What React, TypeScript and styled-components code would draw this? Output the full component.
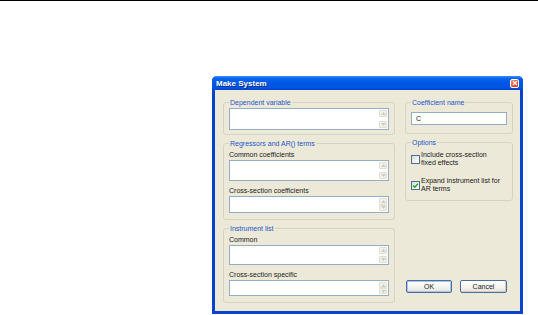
import React from "react";
import styled, { createGlobalStyle } from "styled-components";

const GlobalStyle = createGlobalStyle`
  html, body {
    margin: 0;
    padding: 0;
    background: #fff;
  }
  body {
    font-family: "Liberation Sans", Arial, sans-serif;
  }
`;

const Page = styled.div`
  width: 538px;
  height: 315px;
  box-sizing: border-box;
  border-top: 1px solid #000;
  padding: 75px 0 0 212px;
  overflow: hidden;
`;

const Window = styled.div`
  width: 311px;
  height: 238px;
  display: flex;
  flex-direction: column;
  border-radius: 5px 5px 0 0;
  overflow: hidden;
  background: #0a42d0;
`;

const TitleBar = styled.div`
  height: 14px;
  flex-shrink: 0;
  display: flex;
  align-items: center;
  justify-content: space-between;
  padding: 0 4px;
  background: linear-gradient(#3d8ef9 0%, #0a62ec 18%, #0057e6 50%, #0054e2 85%, #0842c8 100%);
`;

const Title = styled.span`
  color: #fff;
  font-weight: bold;
  font-size: 8px;
  text-shadow: 1px 1px 0 #0a2a8a;
`;

const CloseButton = styled.div`
  width: 9px;
  height: 9px;
  box-sizing: border-box;
  border: 1px solid #fff;
  border-radius: 2px;
  background: linear-gradient(135deg, #f09a80, #e0532e 55%, #c63c18);
  display: flex;
  align-items: center;
  justify-content: center;
`;

const Frame = styled.div`
  flex: 1;
  display: flex;
  padding: 0 3px 3px;
`;

const Body = styled.div`
  flex: 1;
  background: #ece9d8;
  display: grid;
  grid-template-columns: 172px 108px;
  column-gap: 10px;
  padding: 8px 7px 8px 8px;
  font-size: 7px;
  color: #1a1a1a;
`;

const Column = styled.div`
  display: flex;
  flex-direction: column;
  gap: 4px;
`;

const Group = styled.fieldset<{ $pad?: number }>`
  margin: 0;
  padding: 0 5px ${(p) => p.$pad ?? 6}px;
  border: 1px solid #d6d3c2;
  border-radius: 3px;
  display: flex;
  flex-direction: column;
  min-width: 0;
`;

const Legend = styled.legend`
  padding: 0 1px;
  font-size: 7px;
  line-height: 9px;
  color: #2456c8;
`;

const FieldLabel = styled.div<{ $mt?: number }>`
  line-height: 9px;
  margin-top: ${(p) => p.$mt ?? 2}px;
`;

const TextBox = styled.div<{ $h: number; $mt?: number }>`
  height: ${(p) => p.$h}px;
  margin-top: ${(p) => p.$mt ?? 1}px;
  box-sizing: border-box;
  border: 1px solid #94aec6;
  background: #fff;
  display: flex;
  justify-content: space-between;
  padding: 1px 1px 1px 4px;
  line-height: 10px;
`;

const ScrollBar = styled.div`
  width: 8px;
  display: flex;
  flex-direction: column;
  justify-content: space-between;
`;

const ScrollBtn = styled.div`
  height: 7px;
  box-sizing: border-box;
  border: 1px solid #e0ded2;
  border-radius: 1px;
  background: #f3f2ea;
  display: flex;
  align-items: center;
  justify-content: center;
`;

const CheckRow = styled.label<{ $mt: number }>`
  display: flex;
  align-items: center;
  gap: 1px;
  margin-top: ${(p) => p.$mt}px;
  line-height: 8px;
`;

const CheckBox = styled.div`
  width: 9px;
  height: 9px;
  flex-shrink: 0;
  box-sizing: border-box;
  border: 1px solid #4d6f96;
  background: linear-gradient(135deg, #dcdcd6, #fff);
  display: flex;
  align-items: center;
  justify-content: center;
`;

const Buttons = styled.div`
  margin-top: auto;
  margin-bottom: 10px;
  padding-left: 1px;
  display: flex;
  gap: 8px;
`;

const Button = styled.button<{ $w: number; $default?: boolean }>`
  width: ${(p) => p.$w}px;
  height: 13px;
  padding: 0;
  border: 1px solid #4a6e9c;
  border-radius: 2px;
  background: linear-gradient(#ffffff, #f4f3ee 60%, #e3e0d6);
  font-family: "Liberation Sans", Arial, sans-serif;
  font-size: 7px;
  color: #1a1a1a;
  box-shadow: ${(p) => (p.$default ? "inset 0 0 0 1px #a8c4f2" : "inset -1px -1px 0 #d6d0c5")};
`;

const Arrow = ({ up }: { up?: boolean }) => (
  <svg width="5" height="3" viewBox="0 0 5 3">
    <path d={up ? "M0 3 L2.5 0 L5 3 Z" : "M0 0 L2.5 3 L5 0 Z"} fill="#cfcdc2" />
  </svg>
);

const MultiBox = ({ h, mt }: { h: number; mt?: number }) => (
  <TextBox $h={h} $mt={mt}>
    <span />
    <ScrollBar>
      <ScrollBtn>
        <Arrow up />
      </ScrollBtn>
      <ScrollBtn>
        <Arrow />
      </ScrollBtn>
    </ScrollBar>
  </TextBox>
);

const Tick = () => (
  <svg width="7" height="7" viewBox="0 0 7 7">
    <path d="M1 3.5 L2.8 5.3 L6 1.6" stroke="#21a121" strokeWidth="1.4" fill="none" />
  </svg>
);

export default function App() {
  return (
    <>
      <GlobalStyle />
      <Page>
        <Window>
          <TitleBar>
            <Title>Make System</Title>
            <CloseButton>
              <svg width="6" height="6" viewBox="0 0 6 6">
                <path d="M1 1 L5 5 M5 1 L1 5" stroke="#fff" strokeWidth="1.2" />
              </svg>
            </CloseButton>
          </TitleBar>
          <Frame>
            <Body>
              <Column>
                <Group $pad={4}>
                  <Legend>Dependent variable</Legend>
                  <MultiBox h={22} />
                </Group>
                <Group>
                  <Legend>Regressors and AR() terms</Legend>
                  <FieldLabel>Common coefficients</FieldLabel>
                  <MultiBox h={21} />
                  <FieldLabel $mt={5}>Cross-section coefficients</FieldLabel>
                  <MultiBox h={17} />
                </Group>
                <Group>
                  <Legend>Instrument list</Legend>
                  <FieldLabel>Common</FieldLabel>
                  <MultiBox h={20} />
                  <FieldLabel $mt={5}>Cross-section specific</FieldLabel>
                  <MultiBox h={16} />
                </Group>
              </Column>
              <Column>
                <Group $pad={8}>
                  <Legend>Coefficient name</Legend>
                  <TextBox $h={13} $mt={5}>
                    C
                  </TextBox>
                </Group>
                <Group $pad={7}>
                  <Legend>Options</Legend>
                  <CheckRow $mt={4}>
                    <CheckBox />
                    <span>
                      Include cross-section
                      <br />
                      fixed effects
                    </span>
                  </CheckRow>
                  <CheckRow $mt={10}>
                    <CheckBox>
                      <Tick />
                    </CheckBox>
                    <span>
                      Expand instrument list for
                      <br />
                      AR terms
                    </span>
                  </CheckRow>
                </Group>
                <Buttons>
                  <Button $w={46} $default>
                    OK
                  </Button>
                  <Button $w={47}>Cancel</Button>
                </Buttons>
              </Column>
            </Body>
          </Frame>
        </Window>
      </Page>
    </>
  );
}
